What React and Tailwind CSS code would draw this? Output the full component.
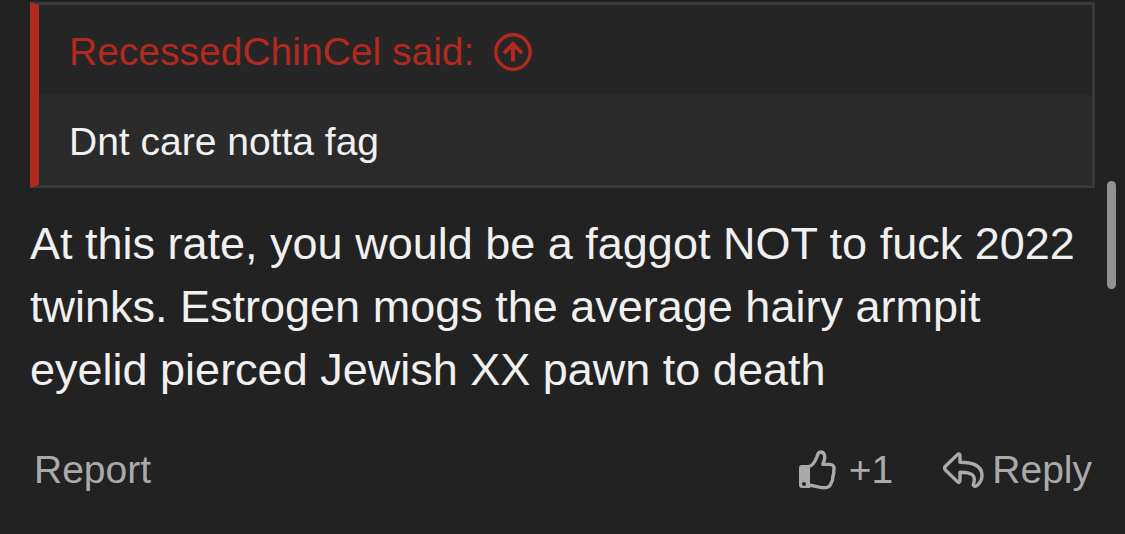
import React from 'react';

const JumpIcon = () => (
  <svg className="w-[38px] h-[38px]" viewBox="0 0 38 38" fill="none" stroke="currentColor" aria-hidden="true">
    <circle cx="19" cy="19" r="17.2" strokeWidth="3.4" />
    <path d="M19 28.5V11M10 20.2L19 11.2l9 9" strokeWidth="4" />
  </svg>
);

const ThumbIcon = () => (
  <svg className="w-[38px] h-[40px]" viewBox="0 0 38 40" fill="none" aria-hidden="true">
    <path
      fill="currentColor"
      fillRule="evenodd"
      d="M3 15h8v23H3q-3 0-3-3V18q0-3 3-3ZM5 32a2 2 0 1 0 0 4 2 2 0 0 0 0-4Z"
    />
    <path
      stroke="currentColor"
      strokeWidth="3.4"
      strokeLinejoin="round"
      d="M9.5 16.7C14 16 16.5 10.5 18 6.5C19 3.5 19.5 2 21.5 2C26 2 26.5 7 25 11L23.8 14.4H31C34.5 14.4 35.6 17 34.8 20.2C35 22.5 34.6 25 33.8 27C33.8 30 33.2 32 32 33.4C31.2 36.7 29 37.8 25 37.8C18.5 37.6 15 35.2 9.5 35.2"
    />
  </svg>
);

const ReplyIcon = () => (
  <svg className="w-[41px] h-[36px]" viewBox="0 0 41 36" fill="none" aria-hidden="true">
    <path
      stroke="currentColor"
      strokeWidth="3.4"
      strokeLinejoin="round"
      d="M2.4 14.2L14.4 2.6Q17 .8 17 4V10.3C31 10.3 39 14 39 23.5C39 28.5 36.8 31.3 33.5 33.8C31.4 35 29.8 33.8 30.5 31.7C33.3 23.2 29 20.2 17 20.2V28Q17 32 14.4 29.6L2.4 18Q.8 16 2.4 14.2Z"
    />
  </svg>
);

const Quote = () => (
  <blockquote className="border-[3px] border-l-[9px] border-[#393939] border-l-[#b3281f] bg-[#2b2b2b] text-[39px] leading-[54px]">
    <div className="bg-[#262626] px-[30px] pt-5 pb-4 text-[#b3281f]">
      <a href="#quoted-post" className="inline-flex items-center gap-5">
        <span>RecessedChinCel said:</span>
        <JumpIcon />
      </a>
    </div>
    <div className="px-[30px] pt-5 pb-4">Dnt care notta fag</div>
  </blockquote>
);

const ActionBar = () => (
  <div className="mt-[42px] flex items-center justify-between pl-1 pr-[3px] text-[39px] leading-[54px] text-[#aaaaaa]">
    <button type="button">Report</button>
    <div className="flex items-center gap-[50px]">
      <button type="button" className="flex items-center gap-3">
        <ThumbIcon />
        <span>+1</span>
      </button>
      <button type="button" className="flex items-center gap-2">
        <ReplyIcon />
        <span>Reply</span>
      </button>
    </div>
  </div>
);

export default function App() {
  return (
    <div className="relative min-h-screen bg-[#222222] px-[30px] pt-[2px] pb-[37px] font-['Liberation_Sans',Arial,sans-serif] text-[#f0f0f0]">
      <article>
        <Quote />
        <p className="mt-6 text-[45px] leading-[63px]">
          At this rate, you would be a faggot NOT to fuck 2022 twinks. Estrogen mogs the average hairy armpit eyelid
          pierced Jewish XX pawn to death
        </p>
        <ActionBar />
      </article>
      {/* Scroll indicator */}
      <div className="absolute right-[9px] top-[181px] h-[108px] w-[9px] rounded-full bg-[#919191]"></div>
    </div>
  );
}
